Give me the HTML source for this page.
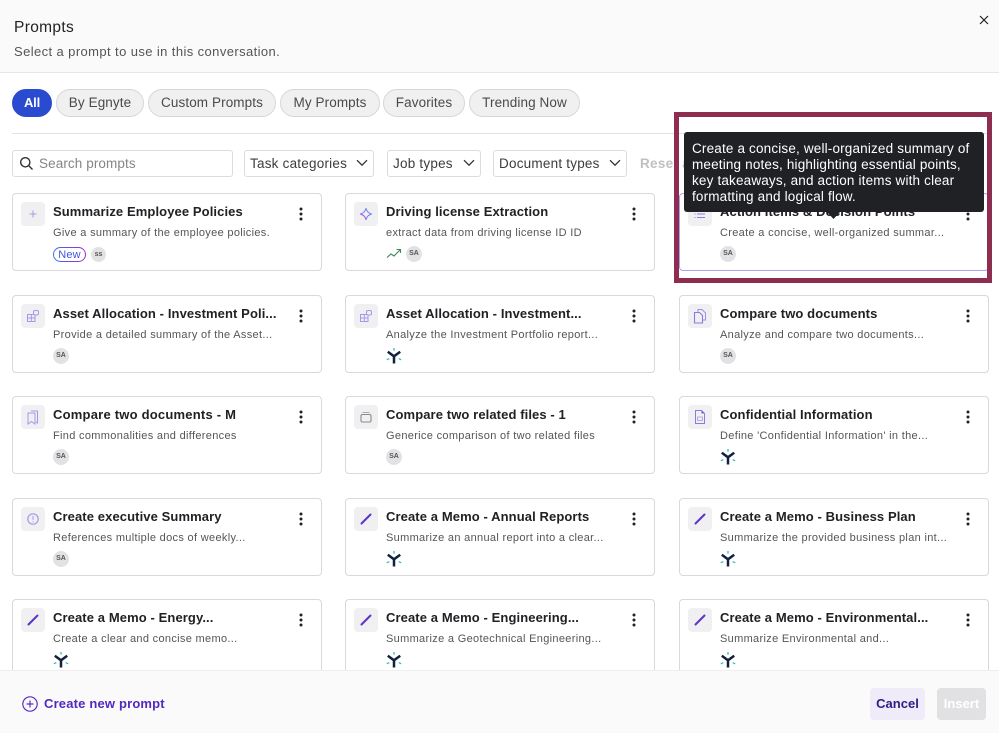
<!DOCTYPE html>
<html><head><meta charset="utf-8"><style>
*{box-sizing:border-box}
html,body{margin:0;padding:0;width:999px;height:733px;overflow:hidden;background:#fff;font-family:"Liberation Sans",sans-serif;color:#202124}
body{filter:blur(.3px)}
.a{position:absolute;white-space:nowrap}
.tab{position:absolute;top:89px;height:28px;border:1px solid #d6d6d6;background:#f0f0f0;border-radius:14px;font-size:13.500px;line-height:26px;text-align:center;color:#4a4a4a;letter-spacing:.1px}
.sel{position:absolute;top:150px;height:27px;border:1px solid #dcdcdc;border-radius:3px;font-size:13.500px;line-height:25px;padding-left:5px;color:#3c3c3c;letter-spacing:.22px;background:#fff}
.sel svg{position:absolute;right:5px;top:8px}
.c{position:absolute;width:310px;height:78px;border:1px solid #d9d9d9;border-radius:4px;background:#fff}
.i{position:absolute;left:8px;top:8px;width:24px;height:24px;border-radius:4px;background:#f0f0f2}
.i svg{position:absolute;left:4px;top:4px}
.t{position:absolute;left:40px;top:10px;font-size:13px;line-height:16px;font-weight:bold;color:#202124;white-space:nowrap;letter-spacing:.1px}
.d{position:absolute;left:40px;top:32px;font-size:11px;line-height:14px;color:#555;white-space:nowrap;letter-spacing:.32px}
.m{position:absolute;left:285px;top:13px}
.v{position:absolute;left:40px;top:52px;width:16px;height:16px;border-radius:50%;background:#e2e2e5;color:#555;font-size:7px;font-weight:bold;line-height:16px;text-align:center}
.l{position:absolute;left:40px;top:52px}
</style></head><body>
<svg width="0" height="0" style="position:absolute"><defs>
<symbol id="dots" viewBox="0 0 6 14"><circle cx="3" cy="2" r="1.500" fill="#222"/><circle cx="3" cy="7" r="1.500" fill="#222"/><circle cx="3" cy="12" r="1.500" fill="#222"/></symbol>
<symbol id="logo" viewBox="0 0 16 16"><path d="M1.800 3.800 8 8.300l6.200-4.500M8 8.300V15.500" fill="none" stroke="#14213d" stroke-width="2.500"/><path d="M8 0v2.600M.8 11.800l2.500-1.200M15.200 11.800 12.700 10.600" fill="none" stroke="#35bdb8" stroke-width="1.300"/></symbol>
<symbol id="pen" viewBox="0 0 16 16"><path d="M3.500 12.500 12.500 3.500" fill="none" stroke="#5b35c8" stroke-width="2" stroke-linecap="round"/></symbol>
<symbol id="grid" viewBox="0 0 16 16"><path d="M2.500 6.500h3.800v3.500H2.500zM6.300 6.500h3.700v3.500H6.300zM2.500 10h3.800v3.500H2.500zM6.300 10h3.700v3.500H6.300z" fill="none" stroke="#a598ea" stroke-width="1"/><rect x="8.500" y="2.500" width="5" height="4.500" rx="1.500" fill="#f0f0f2" stroke="#a598ea"/></symbol>
<symbol id="copy" viewBox="0 0 16 16"><path d="M6 4V1.500h4L13.500 5v7H11" fill="none" stroke="#9d8fe6"/><path d="M2.500 4.500h5l3 3V15h-8z" fill="none" stroke="#8b7ae0" stroke-width="1.100"/></symbol>
<symbol id="book" viewBox="0 0 16 16"><path d="M6 2h6.500v12L11 12.800M3 4h7v11l-3.500-2.500L3 15z" fill="none" stroke="#a598ea" stroke-width="1"/></symbol>
<symbol id="file" viewBox="0 0 16 16"><path d="M3.500 1.500h6l3 3v10h-9z" fill="none" stroke="#8b7ae0"/><path d="M9.500 1.500l3 3h-3z" fill="#6d5bd0"/><rect x="5.500" y="8" width="5" height="3.500" fill="none" stroke="#a89ce8" stroke-width=".8"/></symbol>
<symbol id="info" viewBox="0 0 16 16"><circle cx="8" cy="8" r="5.200" fill="none" stroke="#a598ea" stroke-width="1.200"/><path d="M8 5v3.800M8 10.300v.9" stroke="#a598ea"/></symbol>
<symbol id="box" viewBox="0 0 16 16"><rect x="3" y="5.500" width="10" height="7.500" rx="1.500" fill="none" stroke="#8a8a8a" stroke-width="1.100"/><path d="M4.500 3.500h7" stroke="#aaa"/></symbol>
<symbol id="chev" viewBox="0 0 12 8"><path d="M1 1.200 6 6.200 11 1.200" fill="none" stroke="#333" stroke-width="1.300"/></symbol>
</defs></svg>

<div class="a" style="left:0;top:0;width:999px;height:73px;background:#fafafa;border-bottom:1px solid #e6e6e6"></div>
<div class="a" style="left:14px;top:18px;font-size:15.500px;line-height:20px;color:#222;letter-spacing:.35px">Prompts</div>
<div class="a" style="left:14px;top:44px;font-size:13px;line-height:16px;color:#555;letter-spacing:.4px">Select a prompt to use in this conversation.</div>
<svg class="a" style="left:979px;top:15px" width="10" height="10" viewBox="0 0 10 10"><path d="M1 1l8 8M9 1l-8 8" stroke="#222" stroke-width="1.200"/></svg>

<div class="tab" style="left:12px;width:40px;background:#2a4bd0;border-color:#2a4bd0;color:#fff;font-weight:bold;font-size:13px;letter-spacing:-.2px">All</div>
<div class="tab" style="left:56px;width:88px">By Egnyte</div>
<div class="tab" style="left:148px;width:128px">Custom Prompts</div>
<div class="tab" style="left:280px;width:100px">My Prompts</div>
<div class="tab" style="left:383px;width:82px">Favorites</div>
<div class="tab" style="left:469px;width:111px">Trending Now</div>
<div class="a" style="left:12px;top:133px;width:975px;height:1px;background:#e2e2e2"></div>

<div class="sel" style="left:12px;width:221px;padding-left:26px;color:#858585;letter-spacing:.1px">Search prompts
<svg style="left:6px;right:auto;top:5px" width="15" height="15" viewBox="0 0 15 15"><circle cx="6.300" cy="6.300" r="4.600" fill="none" stroke="#333" stroke-width="1.400"/><path d="M9.800 9.800 13.500 13.500" stroke="#333" stroke-width="1.400"/></svg></div>
<div class="sel" style="left:244px;width:130px">Task categories<svg width="12" height="8"><use href="#chev"/></svg></div>
<div class="sel" style="left:387px;width:94px">Job types<svg width="12" height="8"><use href="#chev"/></svg></div>
<div class="sel" style="left:493px;width:134px">Document types<svg width="12" height="8"><use href="#chev"/></svg></div>
<div class="a" style="left:640px;top:155px;font-size:13.500px;line-height:17px;font-weight:bold;color:#c0c0c0;letter-spacing:.3px">Reset all</div>

<!-- row 1 -->
<div class="c" style="left:12px;top:193px"><div class="i"><svg width="16" height="16" viewBox="0 0 16 16"><path d="M8 4.500v7M4.500 8h7" stroke="#a89ce8" stroke-width="1"/></svg></div><div class="t">Summarize Employee Policies</div><div class="d">Give a summary of the employee policies.</div><svg class="m" width="6" height="14"><use href="#dots"/></svg>
<svg class="a" style="left:40px;top:53px" width="33" height="15" viewBox="0 0 33 15"><defs><linearGradient id="ng" x1="0" y1="0" x2="1" y2="0"><stop offset="0" stop-color="#3f6bf0"/><stop offset="1" stop-color="#a030c8"/></linearGradient></defs><rect x=".5" y=".5" width="32" height="14" rx="7" fill="#fff" stroke="url(#ng)"/><text x="16.500" y="11" text-anchor="middle" font-size="11" fill="#3f55dd" font-family="Liberation Sans, sans-serif" letter-spacing=".2">New</text></svg><div class="v" style="left:78px;top:53px;width:15px;height:15px;line-height:15px">ss</div></div>
<div class="c" style="left:345px;top:193px"><div class="i"><svg width="16" height="16" viewBox="0 0 16 16"><path d="M8 2.200C8.700 5.400 10.600 7.300 13.800 8 10.600 8.700 8.700 10.600 8 13.800 7.300 10.600 5.400 8.700 2.200 8 5.400 7.300 7.300 5.400 8 2.200z" fill="none" stroke="#6f7ff0" stroke-width="1"/><path d="M8 13.800C7.300 10.600 5.400 8.700 2.200 8" fill="none" stroke="#b060e0"/></svg></div><div class="t">Driving license Extraction</div><div class="d">extract data from driving license ID ID</div><svg class="m" width="6" height="14"><use href="#dots"/></svg>
<svg class="a" style="left:40px;top:54px" width="16" height="12" viewBox="0 0 16 12"><path d="M1 9.500 5 6l3 2 6-6M10.500 1.500H14.500V5" fill="none" stroke="#3c8a58" stroke-width="1.100"/></svg><div class="v" style="left:60px">SA</div></div>
<div class="c" style="left:679px;top:193px;border-color:#aaa2ee"><div class="i"><svg width="16" height="16" viewBox="0 0 16 16"><path d="M5 4.500h8M5 8h8M5 11.500h8M2.500 4.500h1M2.500 8h1M2.500 11.500h1" stroke="#8b7ae0" stroke-width="1"/></svg></div><div class="t">Action Items &amp; Decision Points</div><div class="d">Create a concise, well-organized summar...</div><svg class="m" width="6" height="14"><use href="#dots"/></svg><div class="v">SA</div></div>
<!-- row 2 -->
<div class="c" style="left:12px;top:295px"><div class="i"><svg width="16" height="16"><use href="#grid"/></svg></div><div class="t">Asset Allocation - Investment Poli...</div><div class="d">Provide a detailed summary of the Asset...</div><svg class="m" width="6" height="14"><use href="#dots"/></svg><div class="v">SA</div></div>
<div class="c" style="left:345px;top:295px"><div class="i"><svg width="16" height="16"><use href="#grid"/></svg></div><div class="t">Asset Allocation - Investment...</div><div class="d">Analyze the Investment Portfolio report...</div><svg class="m" width="6" height="14"><use href="#dots"/></svg><svg class="l" width="16" height="16"><use href="#logo"/></svg></div>
<div class="c" style="left:679px;top:295px"><div class="i"><svg width="16" height="16"><use href="#copy"/></svg></div><div class="t">Compare two documents</div><div class="d">Analyze and compare two documents...</div><svg class="m" width="6" height="14"><use href="#dots"/></svg><div class="v">SA</div></div>
<!-- row 3 -->
<div class="c" style="left:12px;top:396px"><div class="i"><svg width="16" height="16"><use href="#book"/></svg></div><div class="t" style="letter-spacing:.22px">Compare two documents - M</div><div class="d">Find commonalities and differences</div><svg class="m" width="6" height="14"><use href="#dots"/></svg><div class="v">SA</div></div>
<div class="c" style="left:345px;top:396px"><div class="i"><svg width="16" height="16"><use href="#box"/></svg></div><div class="t">Compare two related files - 1</div><div class="d">Generice comparison of two related files</div><svg class="m" width="6" height="14"><use href="#dots"/></svg><div class="v">SA</div></div>
<div class="c" style="left:679px;top:396px"><div class="i"><svg width="16" height="16"><use href="#file"/></svg></div><div class="t">Confidential Information</div><div class="d">Define 'Confidential Information' in the...</div><svg class="m" width="6" height="14"><use href="#dots"/></svg><svg class="l" width="16" height="16"><use href="#logo"/></svg></div>
<!-- row 4 -->
<div class="c" style="left:12px;top:498px"><div class="i"><svg width="16" height="16"><use href="#info"/></svg></div><div class="t">Create executive Summary</div><div class="d">References multiple docs of weekly...</div><svg class="m" width="6" height="14"><use href="#dots"/></svg><div class="v">SA</div></div>
<div class="c" style="left:345px;top:498px"><div class="i"><svg width="16" height="16"><use href="#pen"/></svg></div><div class="t">Create a Memo - Annual Reports</div><div class="d">Summarize an annual report into a clear...</div><svg class="m" width="6" height="14"><use href="#dots"/></svg><svg class="l" width="16" height="16"><use href="#logo"/></svg></div>
<div class="c" style="left:679px;top:498px"><div class="i"><svg width="16" height="16"><use href="#pen"/></svg></div><div class="t">Create a Memo - Business Plan</div><div class="d">Summarize the provided business plan int...</div><svg class="m" width="6" height="14"><use href="#dots"/></svg><svg class="l" width="16" height="16"><use href="#logo"/></svg></div>
<!-- row 5 -->
<div class="c" style="left:12px;top:599px"><div class="i"><svg width="16" height="16"><use href="#pen"/></svg></div><div class="t">Create a Memo - Energy...</div><div class="d">Create a clear and concise memo...</div><svg class="m" width="6" height="14"><use href="#dots"/></svg><svg class="l" width="16" height="16"><use href="#logo"/></svg></div>
<div class="c" style="left:345px;top:599px"><div class="i"><svg width="16" height="16"><use href="#pen"/></svg></div><div class="t">Create a Memo - Engineering...</div><div class="d">Summarize a Geotechnical Engineering...</div><svg class="m" width="6" height="14"><use href="#dots"/></svg><svg class="l" width="16" height="16"><use href="#logo"/></svg></div>
<div class="c" style="left:679px;top:599px"><div class="i"><svg width="16" height="16"><use href="#pen"/></svg></div><div class="t">Create a Memo - Environmental...</div><div class="d">Summarize Environmental and...</div><svg class="m" width="6" height="14"><use href="#dots"/></svg><svg class="l" width="16" height="16"><use href="#logo"/></svg></div>

<!-- footer -->
<div class="a" style="left:0;top:670px;width:999px;height:63px;background:#fafafa;border-top:1px solid #efefef"></div>
<svg class="a" style="left:22px;top:696px" width="16" height="16" viewBox="0 0 16 16"><circle cx="8" cy="8" r="7.200" fill="none" stroke="#5a2fc4" stroke-width="1.200"/><path d="M8 4.500v7M4.500 8h7" stroke="#5a2fc4" stroke-width="1.200"/></svg>
<div class="a" style="left:44px;top:696px;font-size:13px;line-height:16px;font-weight:bold;color:#5128c0;letter-spacing:.18px">Create new prompt</div>
<div class="a" style="left:870px;top:688px;width:55px;height:32px;border-radius:4px;background:#efebf8;color:#2c1d85;font-size:13px;line-height:32px;font-weight:bold;text-align:center">Cancel</div>
<div class="a" style="left:937px;top:688px;width:49px;height:32px;border-radius:4px;background:#e1e1e4;color:#fff;font-size:13px;line-height:32px;font-weight:bold;text-align:center">Insert</div>

<!-- tooltip -->
<div class="a" style="left:684px;top:132px;width:300px;height:80px;background:#202124;border-radius:3px;color:#fff;font-size:13.500px;line-height:16px;padding:9px 8px 0;white-space:nowrap;letter-spacing:.17px">Create a concise, well-organized summary of<br>meeting notes, highlighting essential points,<br>key takeaways, and action items with clear<br>formatting and logical flow.</div>
<svg class="a" style="left:827px;top:212px" width="13" height="7" viewBox="0 0 13 7"><path d="M0 0h13L6.500 7z" fill="#202124"/></svg>
<!-- highlight -->
<div class="a" style="left:674px;top:112px;width:318px;height:171px;border:5px solid #8e2d50"></div>
</body></html>
